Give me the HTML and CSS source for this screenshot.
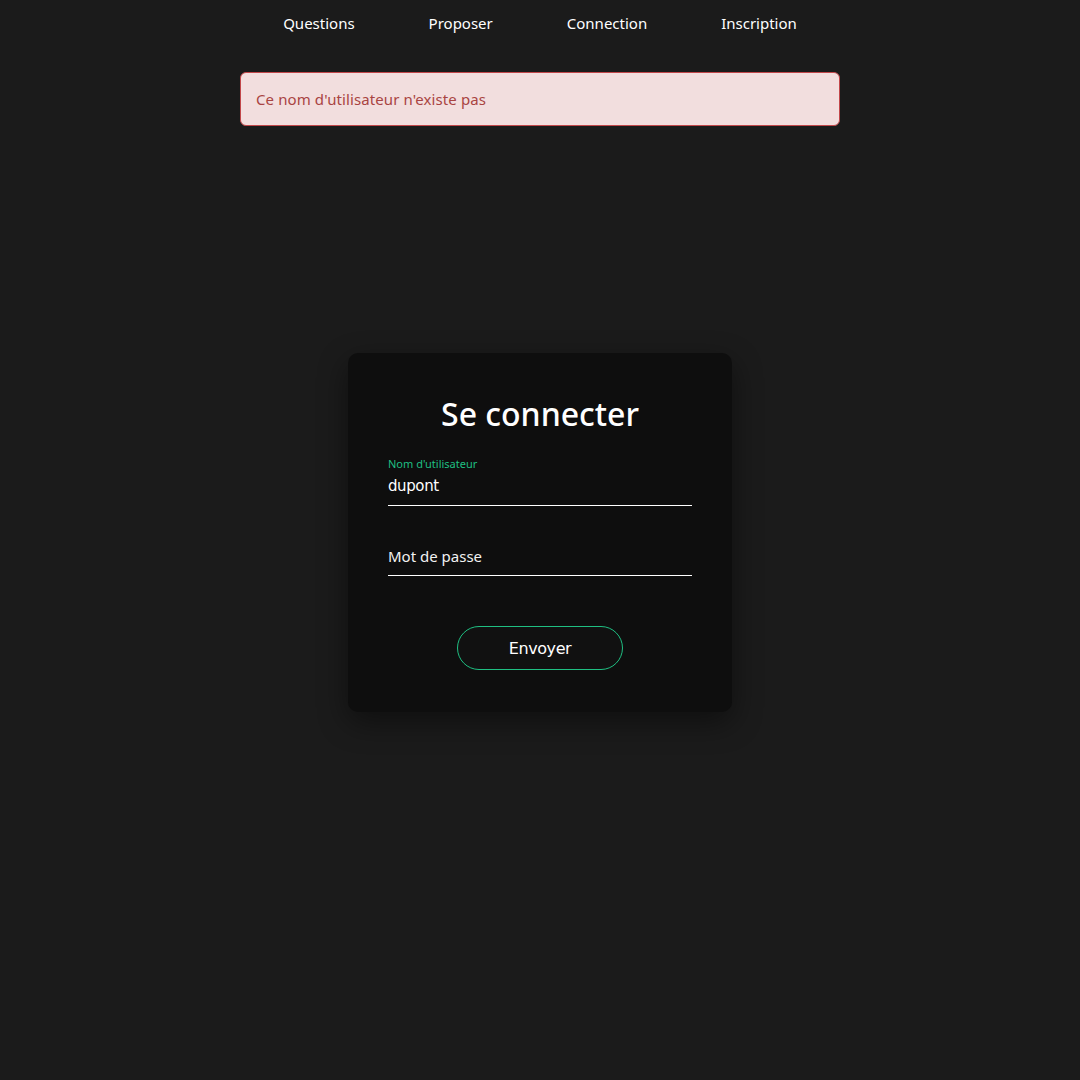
FILE: index.html
```html
<!DOCTYPE html>
<html lang="fr">
<head>
<meta charset="utf-8">
<title>Se connecter</title>
<link rel="stylesheet" href="styles.css">
</head>
<body>
<nav class="nav">
  <a class="nav-link" href="#">Questions</a>
  <a class="nav-link" href="#">Proposer</a>
  <a class="nav-link" href="#">Connection</a>
  <a class="nav-link" href="#">Inscription</a>
</nav>
<div class="alert">Ce nom d'utilisateur n'existe pas</div>
<main class="main">
  <form class="card">
    <h1 class="title">Se connecter</h1>
    <div class="field field-filled">
      <label class="field-label">Nom d'utilisateur</label>
      <div class="field-value">dupont</div>
    </div>
    <div class="field">
      <div class="field-placeholder">Mot de passe</div>
    </div>
    <div class="actions">
      <button class="btn" type="button">Envoyer</button>
    </div>
  </form>
</main>
</body>
</html>
```

FILE: styles.css
```css
html, body {
  margin: 0;
  padding: 0;
}
body {
  background: #1b1b1b;
  color: #fff;
  font-family: "Noto Sans", "Open Sans", sans-serif;
  min-height: 1080px;
}
.nav {
  display: flex;
  justify-content: center;
  height: 46px;
  align-items: center;
}
.nav-link {
  color: #fff;
  text-decoration: none;
  font-size: 15px;
  padding: 0 37px;
}
.alert {
  box-sizing: border-box;
  width: 600px;
  margin: 26px auto 0;
  height: 54px;
  display: flex;
  align-items: center;
  padding: 0 15px;
  background: #f2dede;
  border: 1px solid #c2474a;
  border-radius: 6px;
  color: #a94442;
  font-size: 15px;
  letter-spacing: 0.1px;
}
.main {
  display: flex;
  justify-content: center;
  padding-top: 227px;
}
.card {
  box-sizing: border-box;
  width: 384px;
  height: 359px;
  background: #0e0e0e;
  border-radius: 10px;
  padding: 38px 40px 0;
  box-shadow: 0 10px 30px rgba(0, 0, 0, 0.45);
}
.title {
  margin: 0;
  text-align: center;
  font-size: 32px;
  font-weight: 500;
  line-height: 46px;
  color: #fff;
}
.field {
  border-bottom: 1px solid #fff;
  height: 51px;
  box-sizing: border-box;
}
.field-filled {
  margin-top: 18px;
}
.field + .field {
  margin-top: 19px;
}
.field-label {
  display: block;
  color: #1fbf82;
  font-size: 11px;
  line-height: 14px;
  padding-top: 2px;
}
.field-value {
  font-family: "DejaVu Sans", sans-serif;
  font-size: 15px;
  line-height: 20px;
  margin-top: 5px;
  letter-spacing: -0.4px;
}
.field-placeholder {
  font-size: 15px;
  line-height: 20px;
  padding-top: 21px;
  color: #f2f2f2;
}
.actions {
  display: flex;
  justify-content: center;
  margin-top: 50px;
}
.btn {
  width: 166px;
  height: 44px;
  border-radius: 22px;
  border: 1px solid #1fbf82;
  background: #111;
  color: #fff;
  font-family: "DejaVu Sans", sans-serif;
  font-size: 16px;
  letter-spacing: -0.4px;
  cursor: pointer;
}
```
